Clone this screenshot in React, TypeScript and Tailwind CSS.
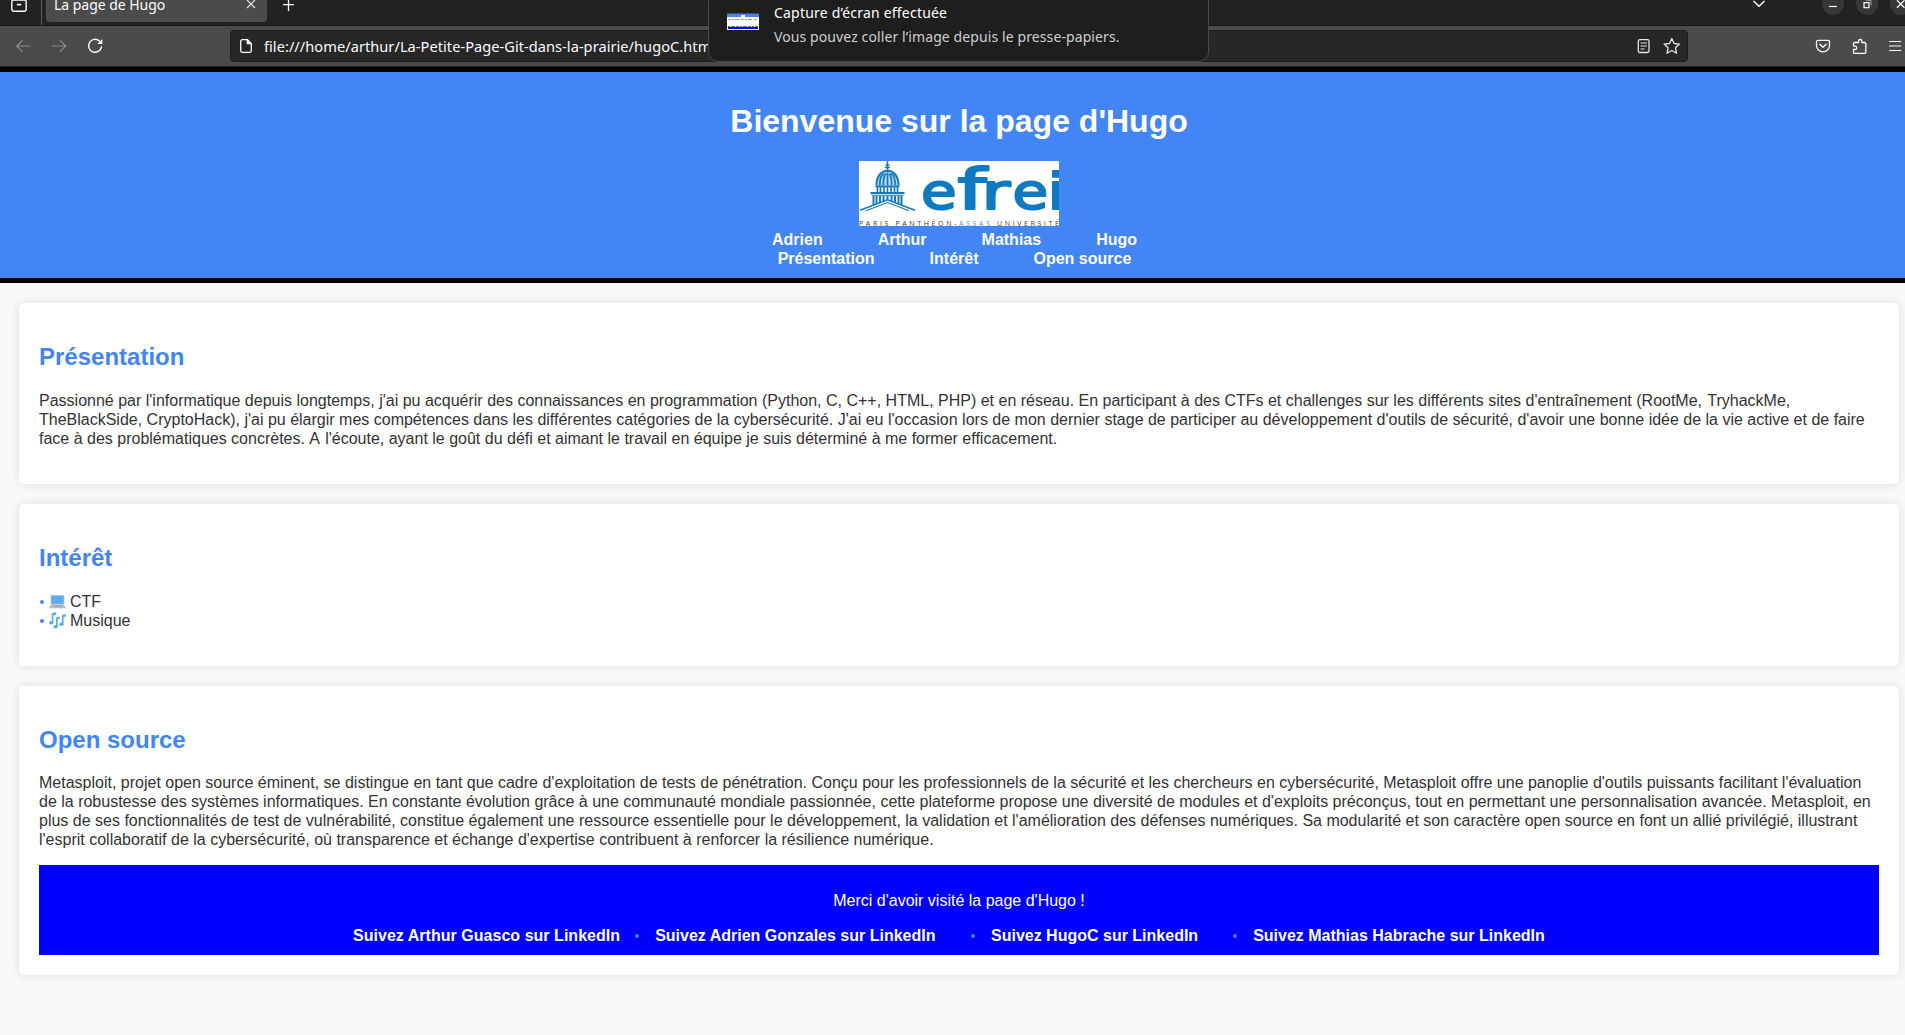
import React from "react";

const ArchiveIcon = () => (
  <svg width="16" height="16" viewBox="0 0 16 16" fill="none" stroke="#fbfbfe" strokeWidth="1.4">
    <rect x="0.8" y="4" width="14.4" height="11.3" rx="2" />
    <path d="M1 3.2h14" />
    <path d="M5.8 8.6h4.4" strokeWidth="1.6" />
  </svg>
);

const TitleBar = () => (
  <div className="flex h-[26px] items-start border-b border-[#171717] bg-[#222222]">
    <div className="-mt-1 ml-[11px] w-[30px] shrink-0">
      <ArchiveIcon />
    </div>
    <div className="h-[25px] w-px bg-[#5a5a5a]" />
    <div className="ml-1 flex h-[22px] w-[221px] items-start justify-between rounded-b-[4px] bg-[#4b4b4b] pr-[11px] pl-2">
      <span className="-mt-[5px] text-[14px] leading-5 tracking-[-0.03px] whitespace-nowrap text-[#fbfbfe]">La page de Hugo</span>
      <svg width="10" height="9" viewBox="0 0 10 9" stroke="#e6e6e6" strokeWidth="1.1" fill="none">
        <path d="M1 0l8 8M9 0L1 8" />
      </svg>
    </div>
    <svg className="ml-[15px]" width="13" height="12" viewBox="0 0 13 12" stroke="#fbfbfe" strokeWidth="1.3" fill="none">
      <path d="M6.5 0v11M1 4.7h11" />
    </svg>
    <svg className="ml-auto" width="14" height="9" viewBox="0 0 14 9" stroke="#fbfbfe" strokeWidth="1.4" fill="none">
      <path d="M1.5 1l5.5 5.3L12.500 1" />
    </svg>
    <svg className="ml-[56px] shrink-0" width="83" height="16" viewBox="0 0 83 16" fill="none">
      <g fill="#373737">
        <circle cx="11" cy="4" r="11" />
        <circle cx="45" cy="4" r="11" />
        <circle cx="79" cy="4" r="11" />
      </g>
      <g stroke="#ffffff" strokeWidth="1.2">
        <path d="M7 6.5h8" />
        <path d="M42 2.600h5v5h-5z" />
        <path d="M44 .5h5v5" stroke="#8d8d8d" />
        <path d="M75 .3l7.500 7.400M82.500 .3L75 7.700" />
      </g>
    </svg>
  </div>
);

const NavArrows = () => (
  <svg className="ml-4 shrink-0" width="90" height="16" viewBox="0 0 90 16" fill="none" strokeLinecap="round" strokeLinejoin="round">
    <g stroke="#8a8a8a" strokeWidth="1.2">
      <path d="M14 8H.8M6.200 2.600L.8 8l5.400 5.400" />
      <path d="M36.500 8h13.200M44.300 2.600L49.700 8l-5.400 5.400" />
    </g>
    <path d="M83.500 3A6.500 6.500 0 1 0 85.500 9" stroke="#fbfbfe" strokeWidth="1.4" />
    <path d="M86.300 1.200v4.900h-4.900z" fill="#fbfbfe" />
  </svg>
);

const AddressBar = () => (
  <div className="ml-[124px] flex h-8 w-[1458px] items-center rounded-[4px] border border-[#1b1b1b] bg-[#272727]">
    <svg className="ml-[9px] shrink-0" width="12" height="14" viewBox="0 0 12 14" fill="none" stroke="#fbfbfe" strokeWidth="1.3" strokeLinejoin="round">
      <path d="M7.300.7H2.200A1.500 1.500 0 0 0 .7 2.200v9.600a1.500 1.500 0 0 0 1.500 1.500h7.600a1.500 1.500 0 0 0 1.500-1.500V4.700z" />
      <path d="M7.300.7v4h4z" fill="#fbfbfe" />
    </svg>
    <span className="ml-3 text-[14.600px] leading-5 tracking-[0.04px] whitespace-nowrap text-[#fbfbfe]">
      file:///home/arthur/La-Petite-Page-Git-dans-la-prairie/hugoC.html
    </span>
    <svg className="mr-[6px] ml-auto shrink-0" width="44" height="16" viewBox="0 0 44 16" fill="none" stroke="#e4e4e6" strokeWidth="1.3" strokeLinejoin="round">
      <rect x="1.3" y="1.700" width="10.700" height="12.800" rx="1.500" />
      <path d="M3.500 5h6.400M3.500 8h6.400M3.500 11h4" strokeWidth="1.200" />
      <path d="M34.800 .5l2.300 5 5.400.6-4 3.700 1.100 5.400-4.800-2.700-4.800 2.700 1.100-5.400-4-3.700 5.400-.6z" />
    </svg>
  </div>
);

const Toolbar = () => (
  <div className="flex h-[41px] items-center border-b border-[#1b1b1b] bg-[#4b4b4b]">
    <NavArrows />
    <AddressBar />
    <svg className="ml-[127px] shrink-0" width="88" height="18" viewBox="0 0 88 18" fill="none" stroke="#fbfbfe" strokeWidth="1.3" strokeLinecap="round" strokeLinejoin="round">
      <path d="M3 3.300h10a1.500 1.500 0 0 1 1.500 1.500v3.700a6.500 6.300 0 0 1-13 0V4.800a1.500 1.500 0 0 1 1.500-1.500z" />
      <path d="M4.800 7.300l3.200 3 3.200-3" />
      <path d="M41 5.500h2.500V4.200a1.700 1.700 0 0 1 3.400 0v1.300h2.700a1.200 1.200 0 0 1 1.200 1.200v8.500a1.200 1.200 0 0 1-1.200 1.200H39.700a1.200 1.200 0 0 1-1.200-1.200v-2.700h1.600a1.700 1.700 0 0 0 0-3.400h-1.600V6.700a1.200 1.200 0 0 1 1.200-1.200z" />
      <path d="M74.500 4.500h11.200M74.500 9h11.200M74.500 13.500h11.200" strokeWidth="1.200" />
    </svg>
  </div>
);

const Notification = () => (
  <div className="absolute top-[-8px] left-[708px] flex h-[70px] w-[501px] rounded-[10px] border border-[#484848] bg-[#1e1e1e]">
    <svg className="mt-5 ml-[18px] shrink-0" width="32" height="17" viewBox="0 0 32 17">
      <rect width="32" height="17" fill="#ffffff" />
      <rect width="32" height="1" fill="#4b4b4b" />
      <rect y="1" width="32" height="3" fill="#4285f4" />
      <path d="M14 2h4v2h-4z" fill="#ffffff" />
      <path d="M1 6.500h30" stroke="#9a9a9a" strokeDasharray="3 1 2 1 4 2" />
      <path d="M1 13.500h30" stroke="#6d6d6d" strokeDasharray="2 1 4 1 3 1" />
      <rect x="1" y="14" width="30" height="2" fill="#0000ff" />
    </svg>
    <div className="ml-[15px] whitespace-nowrap">
      <p className="mt-[10px] text-[14px] leading-5 tracking-[0.2px] text-white">Capture d’écran effectuée</p>
      <p className="mt-1 text-[14px] leading-5 tracking-[0.1px] text-[#cfcfcf]">Vous pouvez coller l’image depuis le presse-papiers.</p>
    </div>
  </div>
);

const EfreiLogo = () => (
  <svg className="mx-auto block bg-white" width="200" height="65" viewBox="0 0 200 65">
    <g fill="none" stroke="#1479bd">
      <path d="M28.500 0v10" strokeWidth="1.500" />
      <path d="M26.500 4h4M26 6.500h5M25 10.500h7" strokeWidth="1.500" />
      <path d="M17.500 24C17.500 7 22 12 28.500 12S39.500 7 39.500 24z" fill="#1479bd" fillOpacity="0.300" stroke="none" />
      <path d="M17.500 24C17.500 5 39.500 5 39.500 24" strokeWidth="2" />
      <path d="M20.800 24q0-9 4-11.500M24.300 24q0-8 2.300-11.500M28.500 24V11.500M32.700 24q0-8-2.300-11.500M36.200 24q0-9-4-11.500" strokeWidth="1.700" />
      <path d="M16.500 25.300h24" strokeWidth="2" />
      <path d="M18.500 26v5M21.500 26v5M25 26v5M28.500 26v5M32 26v5M35.500 26v5M38.500 26v5" strokeWidth="1.700" />
      <path d="M11.500 32h34" strokeWidth="1.800" />
      <path d="M12.500 34.300h32" strokeWidth="1" />
      <path d="M14.500 35v9M17.500 35v8M21 35v6M24.500 35v5M28.500 35v4M32.500 35v5M36 35v6M39.500 35v8M42.500 35v9" strokeWidth="2" />
      <path d="M1 49.300l27.500-10.600L56 49.300" strokeWidth="1.500" />
      <path d="M7 49.800l21.500-8.200L50 49.800" strokeWidth="1.100" />
    </g>
    <g fill="#0f7ac0" stroke="#0f7ac0" strokeWidth="2" strokeLinejoin="round" fontFamily="'DejaVu Sans', sans-serif" fontWeight="400" fontSize="50">
      <text transform="translate(62 47.600) scale(1.160 1)">e</text>
      <text transform="translate(98.500 48.300) scale(1.640 1.120)">f</text>
      <text transform="translate(122.500 48.300) scale(1.400 1)">r</text>
      <text transform="translate(153.500 47.600) scale(1.160 1)">e</text>
      <text transform="translate(188.600 48.300) scale(1.200 1)">i</text>
    </g>
    <text y="65" x="0" fontSize="7" fontWeight="400" fontFamily="'Open Sans', sans-serif" fill="#3a3a3a" textLength="200">
      PARIS PANTHÉON-<tspan fill="#4a9bd0">ASSAS</tspan> UNIVERSITÉ
    </text>
  </svg>
);

const Header = () => (
  <header className="h-[216px] border-y-[5px] border-black bg-[#4285f4] pl-[13px] text-center font-bold text-white">
    <h1 className="pt-[30px] text-[32px] leading-[38px]">Bienvenue sur la page d'Hugo</h1>
    <div className="pt-[21px]">
      <EfreiLogo />
    </div>
    <nav className="mr-[9px] pt-1 leading-[19px]">
      <div className="flex justify-center gap-[55px]">
        <a>Adrien</a>
        <a>Arthur</a>
        <a>Mathias</a>
        <a>Hugo</a>
      </div>
      <div className="flex justify-center gap-[55px]">
        <a>Présentation</a>
        <a>Intérêt</a>
        <a>Open source</a>
      </div>
    </nav>
  </header>
);

const Card = ({ title, className, children }: { title: string; className: string; children: React.ReactNode }) => (
  <section className={"mr-[6px] ml-[19px] rounded-[5px] bg-white p-5 shadow-[0_0_10px_rgba(0,0,0,0.1)] " + className}>
    <h2 className="pt-5 text-[24px] leading-7 font-bold text-[#4285f4]">{title}</h2>
    {children}
  </section>
);

const Laptop = () => (
  <svg className="mr-1 ml-[5px]" width="17" height="17" viewBox="0 0 17 17">
    <rect x="1.500" y="2" width="14" height="9.500" rx=".8" fill="#ccd6dd" />
    <rect x="2.300" y="2.700" width="12.400" height="8.200" fill="#5dadec" />
    <path d="M2 11.500h13l1.700 3.200H.3z" fill="#b4c0c9" />
    <path d="M3 12.300h11M6 13.500h5" stroke="#8899a6" strokeWidth=".7" />
    <path d="M.3 14.500h16.400v.7H.3z" fill="#99a7b3" />
  </svg>
);

const Notes = () => (
  <svg className="mr-1 ml-[5px]" width="17" height="17" viewBox="0 0 17 17" fill="#5dadec">
    <ellipse cx="2.200" cy="10.700" rx="2.200" ry="1.800" />
    <path d="M2.700 11V1.300L7.200 0v2.800L4.400 3.600V11z" />
    <ellipse cx="6.500" cy="14.800" rx="2.200" ry="1.800" />
    <ellipse cx="12.400" cy="12.300" rx="2.200" ry="1.800" />
    <path d="M7 15V5.600l3.600-1v2.300l-1.900.6V15zM12.900 12.500V3.200L16.900 2v2.500l-2.300.8v7.200z" />
  </svg>
);

const Bullet = ({ className }: { className: string }) => (
  <span className={"size-1 shrink-0 rounded-full bg-[#4285f4] " + className} />
);

export default function App() {
  return (
    <div className="relative h-[1035px] overflow-hidden bg-[#f8f8f8] font-['Liberation_Sans',Arial,sans-serif] text-[16px] leading-[19px] text-[#333333]">
      <div className="font-['Noto_Sans',sans-serif]">
        <TitleBar />
        <Toolbar />
        <Notification />
      </div>
      <Header />
      <main>
        <Card title="Présentation" className="mt-5 h-[181px]">
          <p className="mt-5 whitespace-nowrap">
            Passionné par l'informatique depuis longtemps, j'ai pu acquérir des connaissances en programmation (Python, C, C++, HTML, PHP) et en réseau. En participant à des CTFs et challenges sur les différents sites d'entraînement (RootMe,<span className="tracking-[0.8px]"> </span>TryhackMe,
            <br />
            TheBlackSide, CryptoHack), j'ai pu élargir mes compétences dans les différentes catégories de la cybersécurité. J'ai eu l'occasion lors de mon dernier stage de participer au développement d'outils de sécurité, d'avoir une bonne idée de la vie active et de faire
            <br />
            face à des problématiques concrètes.<span className="tracking-[0.8px]"> A </span>l'écoute, ayant le goût du défi et aimant le travail en équipe je suis déterminé à me former efficacement.
          </p>
        </Card>
        <Card title="Intérêt" className="mt-5 h-[162px]">
          <ul className="mt-5">
            <li className="flex h-[19px] items-center">
              <Bullet className="ml-px" />
              <Laptop />
              CTF
            </li>
            <li className="flex h-[19px] items-center">
              <Bullet className="ml-px" />
              <Notes />
              Musique
            </li>
          </ul>
        </Card>
        <Card title="Open source" className="mt-5 h-[289px]">
          <p className="mt-[19px] whitespace-nowrap">
            Metasploit, projet open source éminent, se distingue en tant que cadre d'exploitation de tests de pénétration. Conçu pour les professionnels de la sécurité et les chercheurs en cybersécurité, Metasploit offre une panoplie d'outils puissants facilitant l'évaluation
            <br />
            de la robustesse des systèmes informatiques. En constante évolution grâce à une communauté mondiale passionnée, cette plateforme propose une diversité de modules et d'exploits préconçus, tout en permettant une personnalisation avancée. Metasploit, en
            <br />
            plus de ses fonctionnalités de test de vulnérabilité, constitue également une ressource essentielle pour le développement, la validation et l'amélioration des défenses numériques. Sa modularité et son caractère open source en font un allié privilégié, illustrant
            <br />
            l'esprit collaboratif de la cybersécurité, où transparence et échange d'expertise contribuent à renforcer la résilience numérique.
          </p>
          <footer className="mt-4 h-[90px] bg-[#0000ff] pt-[26px] text-white">
            <p className="text-center">Merci d'avoir visité la page d'Hugo !</p>
            <div className="mt-4 ml-[314px] flex items-center font-bold whitespace-nowrap">
              <a className="tracking-[0.03px]">Suivez Arthur Guasco sur LinkedIn</a>
              <Bullet className="mr-4 ml-[15px]" />
              <a>Suivez Adrien Gonzales sur LinkedIn</a>
              <Bullet className="mr-4 ml-[35.500px]" />
              <a>Suivez HugoC sur LinkedIn</a>
              <Bullet className="mr-4 ml-[35px]" />
              <a>Suivez Mathias Habrache sur LinkedIn</a>
            </div>
          </footer>
        </Card>
      </main>
    </div>
  );
}
